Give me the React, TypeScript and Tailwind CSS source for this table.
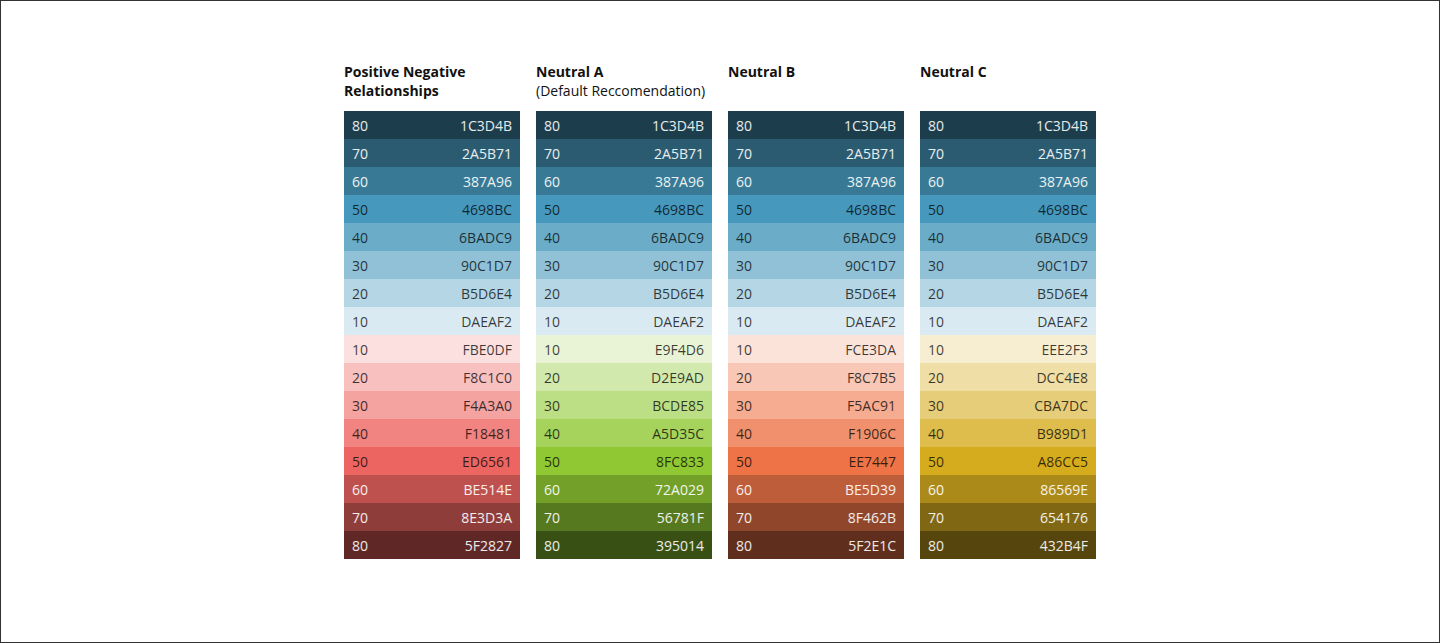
const blues = ["1C3D4B", "2A5B71", "387A96", "4698BC", "6BADC9", "90C1D7", "B5D6E4", "DAEAF2"];
const blueSteps = [80, 70, 60, 50, 40, 30, 20, 10];
const lowSteps = [10, 20, 30, 40, 50, 60, 70, 80];

type Palette = {
    title: string;
    subtitle?: string;
    // bottom half: shown colour + label, light to dark
    warm: { bg: string; label: string }[];
};

const palettes: Palette[] = [
    {
        title: "Positive Negative Relationships",
        warm: ["FBE0DF", "F8C1C0", "F4A3A0", "F18481", "ED6561", "BE514E", "8E3D3A", "5F2827"].map((c) => ({ bg: c, label: c })),
    },
    {
        title: "Neutral A",
        subtitle: "(Default Reccomendation)",
        warm: ["E9F4D6", "D2E9AD", "BCDE85", "A5D35C", "8FC833", "72A029", "56781F", "395014"].map((c) => ({ bg: c, label: c })),
    },
    {
        title: "Neutral B",
        warm: ["FCE3DA", "F8C7B5", "F5AC91", "F1906C", "EE7447", "BE5D39", "8F462B", "5F2E1C"].map((c) => ({ bg: c, label: c })),
    },
    {
        title: "Neutral C",
        // the labels in the source don't match the swatches, keep both
        warm: [
            { bg: "F7EED2", label: "EEE2F3" },
            { bg: "EFDEA5", label: "DCC4E8" },
            { bg: "E6CD79", label: "CBA7DC" },
            { bg: "DEBD4C", label: "B989D1" },
            { bg: "D6AC1F", label: "A86CC5" },
            { bg: "AB8A19", label: "86569E" },
            { bg: "806713", label: "654176" },
            { bg: "56450C", label: "432B4F" },
        ],
    },
];

function Row({ step, bg, label, light }: { step: number; bg: string; label: string; light: boolean }) {
    return (
        <div
            className={`flex h-[28px] items-center justify-between px-2 text-[14px] ${light ? "text-white/90" : "text-black/75"}`}
            style={{ backgroundColor: `#${bg}` }}
        >
            <span>{step}</span>
            <span>{label}</span>
        </div>
    );
}

function Column({ palette }: { palette: Palette }) {
    return (
        <div className="w-[176px]">
            <div className="h-[49px] text-[14px] leading-[19px] text-[#111]">
                <div className="font-bold">{palette.title}</div>
                {palette.subtitle && <div>{palette.subtitle}</div>}
            </div>
            <div className="flex flex-col">
                {blues.map((c, i) => (
                    <Row key={"b" + c} step={blueSteps[i]} bg={c} label={c} light={i < 3} />
                ))}
                {palette.warm.map((w, i) => (
                    <Row key={"w" + i} step={lowSteps[i]} bg={w.bg} label={w.label} light={i > 4} />
                ))}
            </div>
        </div>
    );
}

export default function App() {
    return (
        <main
            className="h-[643px] w-full border border-[#333] bg-white pt-[61px]"
            style={{ fontFamily: '"Open Sans", "Noto Sans", sans-serif' }}
        >
            <div className="flex justify-center gap-4">
                {palettes.map((p) => (
                    <Column key={p.title} palette={p} />
                ))}
            </div>
        </main>
    );
}
